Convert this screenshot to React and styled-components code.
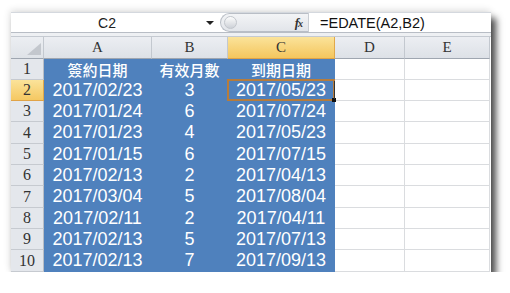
import React from 'react';
import styled, { createGlobalStyle } from 'styled-components';

const GlobalStyle = createGlobalStyle`
  html, body {
    margin: 0;
    background: #fff;
  }
`;

const colWidths = [33, 108, 76, 107, 70, 85];
const rowHeights = [21, 21, 21, 22, 21, 21, 22, 21, 21, 22];

const rows = [
  ['簽約日期', '有效月數', '到期日期'],
  ['2017/02/23', '3', '2017/05/23'],
  ['2017/01/24', '6', '2017/07/24'],
  ['2017/01/23', '4', '2017/05/23'],
  ['2017/01/15', '6', '2017/07/15'],
  ['2017/02/13', '2', '2017/04/13'],
  ['2017/03/04', '5', '2017/08/04'],
  ['2017/02/11', '2', '2017/04/11'],
  ['2017/02/13', '5', '2017/07/13'],
  ['2017/02/13', '7', '2017/09/13'],
];

const Page = styled.div`
  padding: 12px 0 0 11px;
`;

const Window = styled.div`
  width: 480px;
  background: #fff;
  box-shadow: 5px 6px 7px rgba(0, 0, 0, 0.7), -1px -2px 7px rgba(0, 0, 0, 0.12);
`;

const FormulaBar = styled.div`
  display: flex;
  height: 20px;
  border-top: 1px solid #d4d8de;
  box-sizing: border-box;
`;

const NameBox = styled.div`
  width: 209px;
  display: flex;
  align-items: center;
  background: #fff;
`;

const NameText = styled.span`
  width: 192px;
  text-align: center;
  font-family: "Liberation Sans", Arial, sans-serif;
  font-size: 14px;
  color: #222;
`;

const DropArrow = styled.span`
  width: 0;
  height: 0;
  margin-left: 3px;
  border-left: 4px solid transparent;
  border-right: 4px solid transparent;
  border-top: 4px solid #222;
`;

const BarMiddle = styled.div`
  width: 88px;
  display: flex;
  align-items: center;
  justify-content: space-between;
  padding: 0 6px 0 3px;
  box-sizing: border-box;
  background: linear-gradient(#f3f4f6, #e2e5ea);
  border: 1px solid #b9bec6;
  border-right: none;
  border-radius: 10px 0 0 10px;
`;

const Knob = styled.span`
  width: 11px;
  height: 11px;
  border-radius: 50%;
  background: linear-gradient(#fdfdfd, #cdd1d7);
  border: 1px solid #c2c6cc;
`;

const Fx = styled.span`
  font-family: "Liberation Serif", "Times New Roman", serif;
  font-style: italic;
  font-weight: bold;
  font-size: 13px;
  color: #333;
  letter-spacing: -1px;

  small {
    font-size: 10px;
  }
`;

const FormulaInput = styled.div`
  flex: 1;
  display: flex;
  align-items: center;
  padding-left: 11px;
  background: #fff;
  border-left: 1px solid #c9cdd3;
  font-family: "Liberation Sans", Arial, sans-serif;
  font-size: 14.5px;
  color: #111;
`;

const Divider = styled.div`
  height: 5px;
  box-sizing: border-box;
  background: #eef0f3;
  border-top: 1px solid #b8bdc5;
  border-bottom: 1px solid #c5cad1;
`;

const Sheet = styled.div`
  display: grid;
  grid-template-columns: ${colWidths.map((w) => `${w}px`).join(' ')};
  grid-template-rows: 22px ${rowHeights.map((h) => `${h}px`).join(' ')};
`;

const Corner = styled.div`
  position: relative;
  background: linear-gradient(#eceef2, #dfe3e8);
  border-right: 1px solid #c3c8cf;
  border-bottom: 1px solid #9fa6b0;
  box-sizing: border-box;

  &::after {
    content: '';
    position: absolute;
    right: 2px;
    bottom: 3px;
    width: 0;
    height: 0;
    border-left: 14px solid transparent;
    border-bottom: 12px solid #c3c7cd;
  }
`;

const ColHeader = styled.div`
  display: flex;
  align-items: center;
  justify-content: center;
  box-sizing: border-box;
  font-family: "Liberation Serif", "Times New Roman", serif;
  font-size: 15px;
  color: #333;
  background: ${(p) =>
    p.$active
      ? 'linear-gradient(#fbe39a, #f4c65e)'
      : 'linear-gradient(#eceef2, #dde1e7)'};
  border-right: 1px solid ${(p) => (p.$active ? '#e1a94a' : '#c3c8cf')};
  border-bottom: 1px solid ${(p) => (p.$active ? '#e0a347' : '#9fa6b0')};
`;

const RowHeader = styled.div`
  display: flex;
  align-items: center;
  justify-content: center;
  box-sizing: border-box;
  font-family: "Liberation Serif", "Times New Roman", serif;
  font-size: 16px;
  color: #333;
  background: ${(p) =>
    p.$active ? 'linear-gradient(#fbe39a, #f5c862)' : '#e4e7ec'};
  border-right: 1px solid ${(p) => (p.$active ? '#e1a94a' : '#b8bdc5')};
  border-bottom: 1px solid ${(p) => (p.$active ? '#e0a347' : '#c6cad0')};
`;

const Cell = styled.div`
  position: relative;
  display: flex;
  align-items: center;
  justify-content: center;
  box-sizing: border-box;
  font-family: ${(p) =>
    p.$title
      ? '"Noto Sans CJK TC", "Noto Sans", sans-serif'
      : '"Liberation Sans", Arial, sans-serif'};
  font-size: ${(p) => (p.$title ? '15px' : '18px')};
  font-weight: ${(p) => (p.$title ? 500 : 400)};
  color: #fff;
  background: ${(p) => (p.$filled ? '#4f81bd' : '#fff')};
  border-right: 1px solid ${(p) => (p.$filled ? '#4f81bd' : '#dadcdf')};
  border-bottom: 1px solid ${(p) => (p.$filled ? '#4f81bd' : '#dadcdf')};
`;

const Selection = styled.span`
  position: absolute;
  left: -1px;
  top: -1px;
  right: -1px;
  bottom: -1px;
  border: 2px solid #b67c3c;
  pointer-events: none;
  z-index: 2;

  &::after {
    content: '';
    position: absolute;
    right: -2px;
    top: 0;
    bottom: 0;
    width: 1px;
    background: #333;
  }

  &::before {
    content: '';
    position: absolute;
    right: -3px;
    bottom: -3px;
    width: 4px;
    height: 4px;
    background: #111;
  }
`;

export default function App() {
  return (
    <>
      <GlobalStyle />
      <Page>
        <Window>
          <FormulaBar>
            <NameBox>
              <NameText>C2</NameText>
              <DropArrow />
            </NameBox>
            <BarMiddle>
              <Knob />
              <Fx>
                f<small>x</small>
              </Fx>
            </BarMiddle>
            <FormulaInput>=EDATE(A2,B2)</FormulaInput>
          </FormulaBar>
          <Divider />
          <Sheet>
            <Corner />
            {['A', 'B', 'C', 'D', 'E'].map((c) => (
              <ColHeader key={c} $active={c === 'C'}>
                {c}
              </ColHeader>
            ))}
            {rows.map((r, i) => (
              <React.Fragment key={i}>
                <RowHeader $active={i === 1}>{i + 1}</RowHeader>
                {r.map((v, j) => (
                  <Cell key={j} $filled $title={i === 0}>
                    {v}
                    {i === 1 && j === 2 && <Selection />}
                  </Cell>
                ))}
                <Cell />
                <Cell />
              </React.Fragment>
            ))}
          </Sheet>
        </Window>
      </Page>
    </>
  );
}
